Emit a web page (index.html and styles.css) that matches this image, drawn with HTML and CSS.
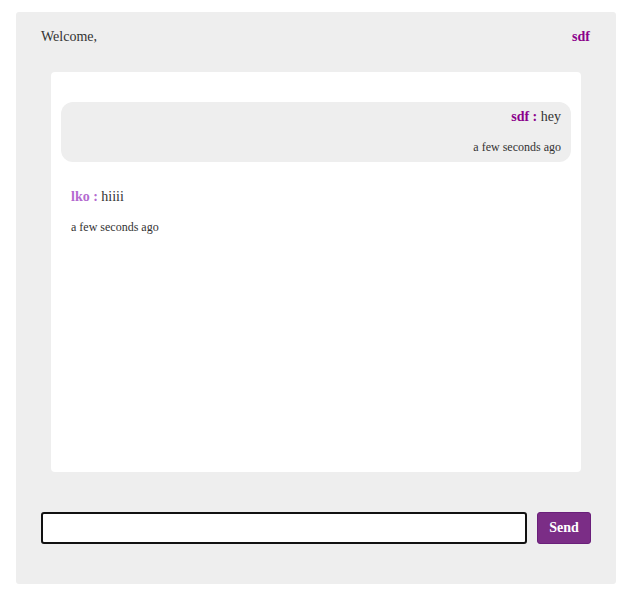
FILE: index.html
```html
<!DOCTYPE html>
<html>
<head>
<meta charset="utf-8">
<link rel="stylesheet" href="styles.css">
</head>
<body>
<div class="app">
  <div class="header">
    <span class="welcome">Welcome,</span>
    <span class="user">sdf</span>
  </div>
  <div class="chat">
    <div class="msg mine">
      <div class="line"><span class="name me">sdf : </span>hey</div>
      <div class="time">a few seconds ago</div>
    </div>
    <div class="msg">
      <div class="line"><span class="name other">lko : </span>hiiii</div>
      <div class="time">a few seconds ago</div>
    </div>
  </div>
  <div class="composer">
    <input class="input" type="text">
    <button class="send">Send</button>
  </div>
</div>
</body>
</html>
```
FILE: styles.css
```css
html, body {
  margin: 0;
  padding: 0;
  background: #fff;
}
body {
  font-family: "Liberation Serif", "Times New Roman", serif;
  color: #333;
}
.app {
  width: 600px;
  margin: 12px 16px;
  background: #eeeeee;
  border-radius: 3px;
  box-sizing: border-box;
  padding-bottom: 40px;
}
.header {
  display: flex;
  justify-content: space-between;
  padding: 15px 26px 0 25px;
  line-height: 20px;
  font-size: 14px;
}
.user {
  font-weight: bold;
  color: #8b008b;
}
.chat {
  margin: 25px 35px 0;
  height: 400px;
  background: #fff;
  border-radius: 4px;
  box-sizing: border-box;
  padding: 30px 10px;
  display: flex;
  flex-direction: column;
  gap: 20px;
}
.msg {
  padding: 5px 10px 8px;
  border-radius: 12px;
}
.msg.mine {
  background: #eeeeee;
  text-align: right;
}
.line {
  font-size: 14px;
  line-height: 20px;
}
.name {
  font-weight: bold;
}
.name.me {
  color: #8b008b;
}
.name.other {
  color: #b46ad0;
}
.time {
  font-size: 12px;
  line-height: 14px;
  margin-top: 13px;
}
.composer {
  display: flex;
  gap: 10px;
  padding: 40px 25px 0;
}
.input {
  width: 486px;
  height: 32px;
  box-sizing: border-box;
  border: 2px solid #111;
  border-radius: 3px;
  background: #fff;
  margin: 0;
  padding: 0 6px;
}
.send {
  width: 54px;
  height: 32px;
  box-sizing: border-box;
  margin: 0;
  background: #7b2d86;
  border: 1px solid #6a1f7a;
  border-radius: 3px;
  color: #fff;
  font-family: "Liberation Serif", "Times New Roman", serif;
  font-weight: bold;
  font-size: 14px;
  padding: 0;
}
```
